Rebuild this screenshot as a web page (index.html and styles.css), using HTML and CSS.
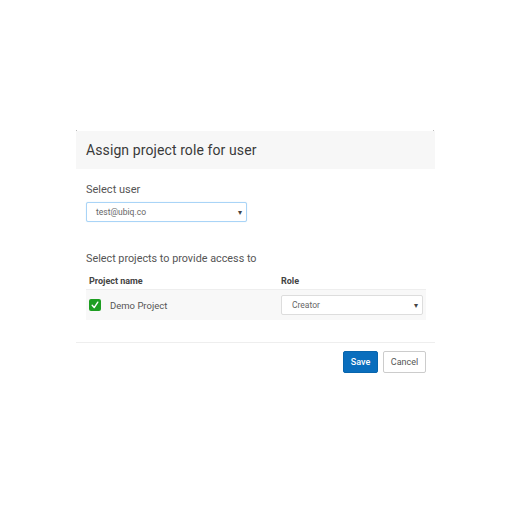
FILE: index.html
```html
<!DOCTYPE html>
<html>
<head>
<meta charset="utf-8">
<link rel="stylesheet" href="styles.css">
</head>
<body>
<div class="modal">
  <div class="modal-header">
    <h1 class="title">Assign project role for user</h1>
  </div>
  <div class="modal-body">
    <label class="label">Select user</label>
    <div class="select select-user">
      <span>test@ubiq.co</span>
      <span class="arrow">▾</span>
    </div>
    <div class="label label-projects">Select projects to provide access to</div>
    <div class="table">
      <div class="thead">
        <div class="th">Project name</div>
        <div class="th">Role</div>
      </div>
      <div class="row">
        <div class="cell project">
          <span class="checkbox">
            <svg width="12" height="12" viewBox="0 0 12 12"><path d="M3.2 6.3 L5.2 8.6 L8.8 3.2" fill="none" stroke="#fff" stroke-width="1.4" stroke-linecap="round" stroke-linejoin="round"/></svg>
          </span>
          <span class="pname">Demo Project</span>
        </div>
        <div class="cell">
          <div class="select select-role">
            <span>Creator</span>
            <span class="arrow">▾</span>
          </div>
        </div>
      </div>
    </div>
  </div>
  <div class="modal-footer">
    <button class="btn btn-primary">Save</button>
    <button class="btn btn-default">Cancel</button>
  </div>
</div>
</body>
</html>
```

FILE: styles.css
```css
html, body {
  margin: 0;
  padding: 0;
  background: #fff;
}
body {
  font-family: Roboto, "Liberation Sans", sans-serif;
  color: #555;
  padding: 131px 0 0 76px;
}
.modal {
  position: relative;
  width: 359px;
  padding-bottom: 7px;
}
.modal::before, .modal::after {
  content: "";
  position: absolute;
  top: -1px;
  width: 1px;
  height: 1px;
  background: #bbb;
}
.modal::before { left: 0; }
.modal::after { right: 1px; }
.modal-footer::before, .modal-footer::after {
  content: "";
  position: absolute;
  bottom: -8px;
  width: 1px;
  height: 1px;
  background: #bbb;
}
.modal-footer::before { left: 0; }
.modal-footer::after { right: 1px; }

.modal-header {
  background: #f7f7f7;
  height: 38px;
  display: flex;
  align-items: center;
  padding-left: 10px;
}
.title {
  margin: 0;
  font-size: 14px;
  font-weight: 400;
  color: #3a3a3a;
  letter-spacing: 0.1px;
}
.modal-body {
  padding: 14px 10px 22px 10px;
}
.label {
  display: block;
  font-size: 11px;
  color: #555;
  line-height: 14px;
}
.label-projects {
  font-size: 10.8px;
  margin-top: 30px;
}
.select {
  box-sizing: border-box;
  display: flex;
  align-items: center;
  justify-content: space-between;
  height: 20px;
  border: 1px solid #ddd;
  border-radius: 2px;
  background: #fff;
  font-size: 8.5px;
  color: #666;
  padding: 0 4px 0 9px;
}
.select .arrow {
  font-size: 8px;
  color: #444;
}
.select-user {
  width: 161px;
  margin-top: 5px;
  border-color: #a9d4f7;
  box-shadow: 0 0 1px rgba(102, 175, 233, 0.4);
}
.table {
  margin-top: 6px;
  width: 340px;
}
.thead, .row {
  display: grid;
  grid-template-columns: 192px 1fr;
}
.thead {
  height: 17px;
  align-items: center;
}
.th {
  padding-left: 3px;
  font-size: 9px;
  font-weight: 700;
  color: #444;
}
.row {
  background: #f8f8f8;
  height: 30px;
  align-items: center;
  border-top: 1px solid #eee;
}
.cell {
  padding: 0 3px;
}
.project {
  display: flex;
  align-items: center;
}
.checkbox {
  width: 12px;
  height: 12px;
  background: #1e9e22;
  border-radius: 2px;
  display: inline-flex;
}
.pname {
  margin-left: 9px;
  font-size: 9.5px;
  color: #555;
}
.select-role {
  width: 142px;
  padding-left: 10px;
}
.modal-footer {
  border-top: 1px solid #eee;
  display: flex;
  justify-content: flex-end;
  gap: 5px;
  padding: 8px 9px 0 0;
}
.btn {
  box-sizing: border-box;
  height: 22px;
  border-radius: 2px;
  font-family: Roboto, "Liberation Sans", sans-serif;
  font-size: 9px;
  padding: 0;
  cursor: pointer;
}
.btn-primary {
  width: 35px;
  background: #0a6ebd;
  border: 1px solid #0865ad;
  color: #fff;
  font-weight: 500;
}
.btn-default {
  width: 43px;
  background: #fff;
  border: 1px solid #ccc;
  color: #555;
}
```
